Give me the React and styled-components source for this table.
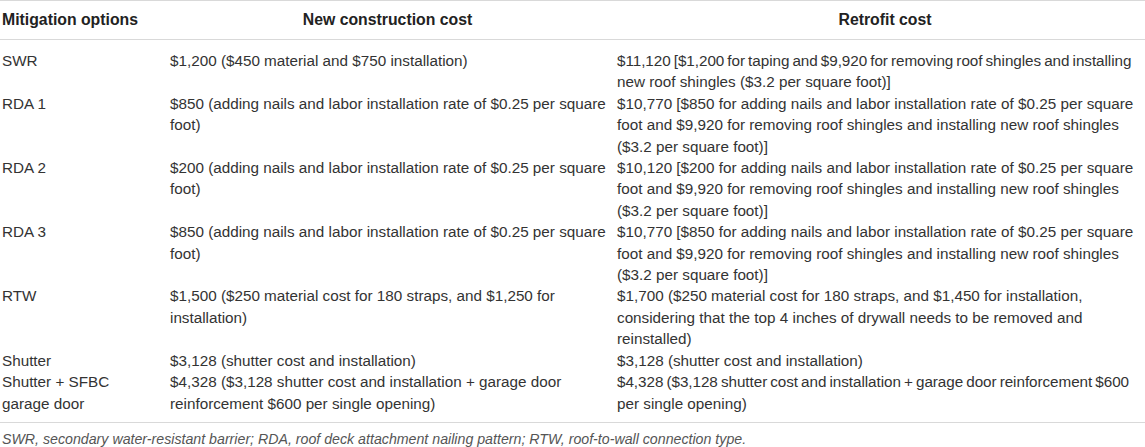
import styled, { createGlobalStyle } from "styled-components";

const GlobalStyle = createGlobalStyle`
  html, body {
    margin: 0;
    padding: 0;
    background: #ffffff;
  }
  body {
    font-family: "Liberation Sans", Arial, sans-serif;
    color: #333333;
  }
`;

const rows = [
  {
    option: ["SWR"],
    build: ["$1,200 ($450 material and $750 installation)"],
    retrofit: [
      ["$11,120 [$1,200 for taping and $9,920 for removing roof shingles and installing", true],
      ["new roof shingles ($3.2 per square foot)]"],
    ],
  },
  {
    option: ["RDA 1"],
    build: ["$850 (adding nails and labor installation rate of $0.25 per square", "foot)"],
    retrofit: [
      ["$10,770 [$850 for adding nails and labor installation rate of $0.25 per square"],
      ["foot and $9,920 for removing roof shingles and installing new roof shingles"],
      ["($3.2 per square foot)]"],
    ],
  },
  {
    option: ["RDA 2"],
    build: ["$200 (adding nails and labor installation rate of $0.25 per square", "foot)"],
    retrofit: [
      ["$10,120 [$200 for adding nails and labor installation rate of $0.25 per square"],
      ["foot and $9,920 for removing roof shingles and installing new roof shingles"],
      ["($3.2 per square foot)]"],
    ],
  },
  {
    option: ["RDA 3"],
    build: ["$850 (adding nails and labor installation rate of $0.25 per square", "foot)"],
    retrofit: [
      ["$10,770 [$850 for adding nails and labor installation rate of $0.25 per square"],
      ["foot and $9,920 for removing roof shingles and installing new roof shingles"],
      ["($3.2 per square foot)]"],
    ],
  },
  {
    option: ["RTW"],
    build: ["$1,500 ($250 material cost for 180 straps, and $1,250 for", "installation)"],
    retrofit: [
      ["$1,700 ($250 material cost for 180 straps, and $1,450 for installation,"],
      ["considering that the top 4 inches of drywall needs to be removed and"],
      ["reinstalled)"],
    ],
  },
  {
    option: ["Shutter"],
    build: ["$3,128 (shutter cost and installation)"],
    retrofit: [["$3,128 (shutter cost and installation)"]],
  },
  {
    option: ["Shutter + SFBC", "garage door"],
    build: ["$4,328 ($3,128 shutter cost and installation + garage door", "reinforcement $600 per single opening)"],
    retrofit: [
      ["$4,328 ($3,128 shutter cost and installation + garage door reinforcement $600", true],
      ["per single opening)"],
    ],
  },
];

function App() {
  return (
    <>
      <GlobalStyle />
      <Wrapper>
        <Table>
          <colgroup>
            <col style={{ width: "168px" }} />
            <col style={{ width: "447px" }} />
            <col />
          </colgroup>
          <thead>
            <tr>
              <HeadCell>Mitigation options</HeadCell>
              <HeadCell $center>New construction cost</HeadCell>
              <HeadCell $center $shift={12}>Retrofit cost</HeadCell>
            </tr>
          </thead>
          <Body>
            {rows.map((row, i) => (
              <tr key={i}>
                <Cell>
                  {row.option.map((l) => (
                    <Line key={l}>{l}</Line>
                  ))}
                </Cell>
                <Cell>
                  {row.build.map((l) => (
                    <Line key={l}>{l}</Line>
                  ))}
                </Cell>
                <Cell>
                  {row.retrofit.map(([l, tight]) => (
                    <Line key={l} $tight={tight}>
                      {l}
                    </Line>
                  ))}
                </Cell>
              </tr>
            ))}
          </Body>
        </Table>
        <Footnote>
          SWR, secondary water-resistant barrier; RDA, roof deck attachment nailing pattern; RTW, roof-to-wall connection type.
        </Footnote>
      </Wrapper>
    </>
  );
}

const Wrapper = styled.div`
  width: 1145px;
  height: 447px;
  overflow: hidden;
`;

const Table = styled.table`
  width: 100%;
  border-collapse: collapse;
  table-layout: fixed;
  border-top: 1px solid #d9d9d9;
  border-bottom: 1px solid #d9d9d9;
  font-size: 15.25px;

  th:nth-child(2),
  td:nth-child(2) {
    padding-right: 10px;
  }
`;

const HeadCell = styled.th`
  height: 38px;
  padding: 0 2px 0 ${(p) => (p.$shift ? `${p.$shift}px` : "2px")};
  font-size: 15.8px;
  font-weight: bold;
  color: #222222;
  text-align: ${(p) => (p.$center ? "center" : "left")};
  border-bottom: 1px solid #d9d9d9;
  vertical-align: middle;
`;

const Body = styled.tbody`
  tr:first-child td {
    padding-top: 10px;
  }
  tr:last-child td {
    padding-bottom: 8px;
  }
`;

const Cell = styled.td`
  padding: 0 2px;
  vertical-align: top;
  line-height: 21.4px;
`;

const Line = styled.span`
  display: block;
  white-space: nowrap;
  word-spacing: ${(p) => (p.$tight ? "-1.1px" : "0")};
  letter-spacing: ${(p) => (p.$tight ? "-0.05px" : "0")};
`;

const Footnote = styled.p`
  margin: 0;
  padding: 6px 2px 0;
  font-size: 14.2px;
  font-style: italic;
  color: #555555;
  line-height: 20px;
`;

export default App;
